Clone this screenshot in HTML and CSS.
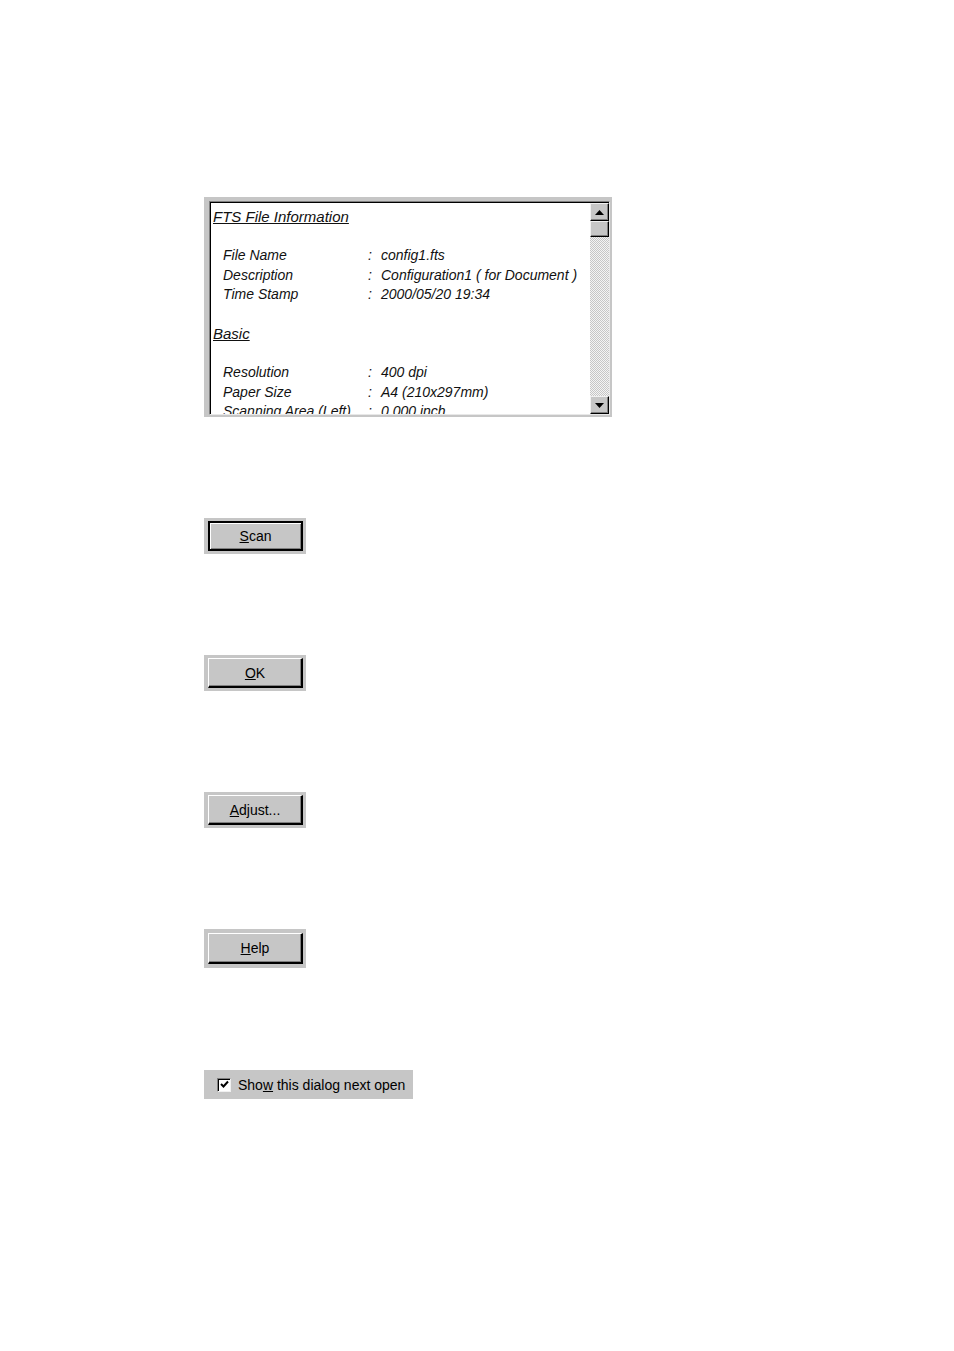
FILE: index.html
```html
<!DOCTYPE html>
<html>
<head>
<meta charset="utf-8">
<link rel="stylesheet" href="styles.css">
</head>
<body>
<div class="page">
  <div class="panel">
    <div class="listbox">
      <div class="content">
        <div class="line heading">FTS File Information</div>
        <div class="line"></div>
        <div class="row"><span>File Name</span><span>:</span><span>config1.fts</span></div>
        <div class="row"><span>Description</span><span>:</span><span>Configuration1 ( for Document )</span></div>
        <div class="row"><span>Time Stamp</span><span>:</span><span>2000/05/20 19:34</span></div>
        <div class="line"></div>
        <div class="line heading">Basic</div>
        <div class="line"></div>
        <div class="row"><span>Resolution</span><span>:</span><span>400 dpi</span></div>
        <div class="row"><span>Paper Size</span><span>:</span><span>A4 (210x297mm)</span></div>
        <div class="row"><span>Scanning Area (Left)</span><span>:</span><span>0.000 inch</span></div>
      </div>
      <div class="scrollbar">
        <div class="sbtn"><svg width="9" height="5" viewBox="0 0 9 5"><path d="M4.5 0 L9 5 L0 5 Z" fill="#000"/></svg></div>
        <div class="thumb"></div>
        <div class="track"></div>
        <div class="sbtn"><svg width="9" height="5" viewBox="0 0 9 5"><path d="M0 0 L9 0 L4.5 5 Z" fill="#000"/></svg></div>
      </div>
    </div>
  </div>

  <div class="btnblock"><div class="btn default"><span><u>S</u>can</span></div></div>
  <div class="btnblock"><div class="btn"><span><u>O</u>K</span></div></div>
  <div class="btnblock"><div class="btn"><span><u>A</u>djust...</span></div></div>
  <div class="btnblock tall"><div class="btn"><span><u>H</u>elp</span></div></div>

  <div class="checkblock">
    <div class="checkbox"><svg width="9" height="9" viewBox="0 0 9 9"><path d="M1 4 L3.5 6.5 L8 1.5" fill="none" stroke="#000" stroke-width="2"/></svg></div>
    <span class="checklabel">Sho<u>w</u> this dialog next open</span>
  </div>
</div>
</body>
</html>
```
FILE: styles.css
```css
html, body {
  margin: 0;
  padding: 0;
  background: #fff;
}
.page {
  padding-left: 204px;
  padding-top: 197px;
  display: flex;
  flex-direction: column;
  align-items: flex-start;
  font-family: "Liberation Sans", Arial, sans-serif;
}
.panel {
  width: 408px;
  height: 220px;
  box-sizing: border-box;
  background: #c6c6c6;
  padding: 4px 2px 2px 5px;
  display: flex;
}
.listbox {
  flex: 1;
  display: flex;
  border-top: 1px solid #808080;
  border-left: 1px solid #808080;
  border-right: 1px solid #e8e8e8;
  border-bottom: 1px solid #e8e8e8;
  box-shadow: inset 1px 1px 0 #000;
  background: #fff;
}
.content {
  flex: 1;
  overflow: hidden;
  padding: 5px 0 0 3px;
  font-style: italic;
  font-size: 14px;
  color: #111;
  line-height: 19.5px;
}
.line {
  height: 19.5px;
  white-space: nowrap;
}
.heading {
  text-decoration: underline;
  font-size: 15px;
}
.row {
  display: grid;
  grid-template-columns: 145px 13px auto;
  padding-left: 10px;
  height: 19.5px;
  white-space: nowrap;
}
.scrollbar {
  width: 19px;
  display: flex;
  flex-direction: column;
  padding-top: 1px;
}
.sbtn, .thumb {
  box-sizing: border-box;
  background: #c6c6c6;
  border-top: 1px solid #f0f0f0;
  border-left: 1px solid #f0f0f0;
  border-right: 1px solid #000;
  border-bottom: 1px solid #000;
  box-shadow: inset -1px -1px 0 #808080;
  display: flex;
  align-items: center;
  justify-content: center;
}
.sbtn {
  height: 18px;
}
.thumb {
  height: 16px;
}
.track {
  flex: 1;
  background-color: #e6e6e6;
  background-image: repeating-conic-gradient(#c6c6c6 0 25%, #f4f4f4 0 50%);
  background-size: 2px 2px;
}
.btnblock {
  margin-top: 101px;
  width: 102px;
  height: 36px;
  box-sizing: border-box;
  background: #c6c6c6;
  padding: 3px 3px 3px 4px;
  display: flex;
}
.btnblock.tall {
  height: 39px;
  padding-top: 4px;
  padding-bottom: 4px;
}
.btn {
  flex: 1;
  box-sizing: border-box;
  background: #c6c6c6;
  border-top: 1px solid #fff;
  border-left: 1px solid #fff;
  border-right: 2px solid #000;
  border-bottom: 2px solid #000;
  box-shadow: inset -1px -1px 0 #808080;
  display: flex;
  align-items: center;
  justify-content: center;
  font-size: 14px;
  color: #000;
}
.btn.default {
  border: 2px solid #000;
  box-shadow: inset 1px 1px 0 #fff, inset -1px -1px 0 #808080;
}
.checkblock {
  margin-top: 102px;
  width: 209px;
  height: 29px;
  box-sizing: border-box;
  background: #c6c6c6;
  display: flex;
  align-items: center;
  padding-left: 13px;
  gap: 7px;
}
.checkbox {
  width: 14px;
  height: 14px;
  box-sizing: border-box;
  background: #fff;
  border-top: 1px solid #808080;
  border-left: 1px solid #808080;
  border-right: 1px solid #f0f0f0;
  border-bottom: 1px solid #f0f0f0;
  box-shadow: inset 1px 1px 0 #000;
  display: flex;
  align-items: center;
  justify-content: center;
}
.checklabel {
  font-size: 14px;
  color: #000;
  white-space: nowrap;
}
```
